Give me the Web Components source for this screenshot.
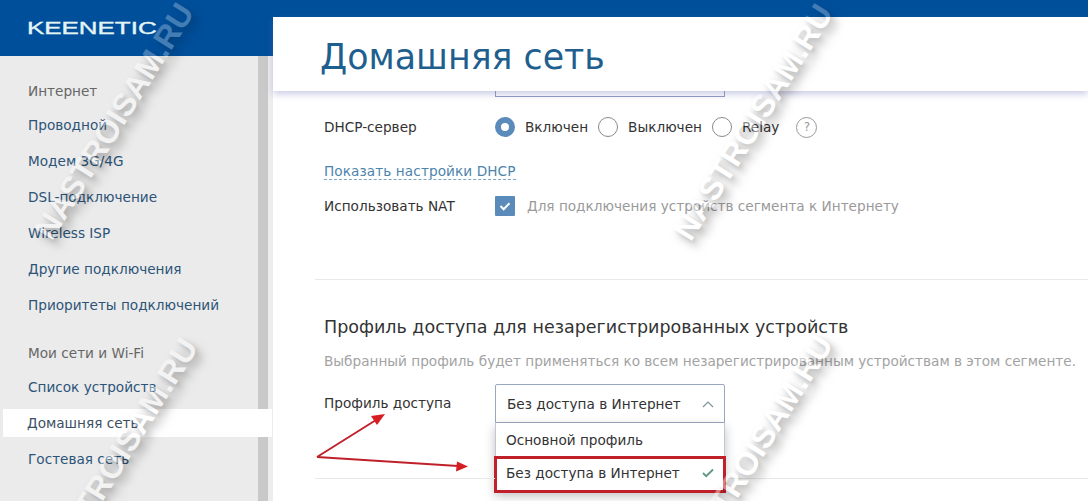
<!DOCTYPE html>
<html lang="ru">
<head>
<meta charset="utf-8">
<title>Домашняя сеть</title>
<style>
    html, body { margin: 0; height: 100%; overflow: hidden; background: #fff; }
    body { font-family: "DejaVu Sans", sans-serif; font-size: 13.63px; color: #333; }
</style>
</head>
<body>
<keenetic-app></keenetic-app>

<script>
class KeeneticApp extends HTMLElement {
    constructor() {
        super();
        this.attachShadow({ mode: "open" });
    }

    connectedCallback() {
        this.shadowRoot.innerHTML = `
            <style>
                :host { display: block; position: relative; width: 1088px; height: 501px; overflow: hidden; }
                .page { display: grid; grid-template-columns: 273px 1fr; height: 501px; }
                .right { display: flex; flex-direction: column; min-width: 0; }
                .topbar { height: 17px; background: #004f9b; }
                /* the blue header mutes the watermark that runs over it */
                .tint { position: absolute; z-index: 7; background: rgba(0, 79, 155, .38); }
                .tint.a { left: 0; top: 0; width: 1088px; height: 17px; }
                .tint.b { left: 0; top: 17px; width: 273px; height: 39px; }
            </style>
            <div class="page">
                <keenetic-sidebar></keenetic-sidebar>
                <div class="right">
                    <div class="topbar"></div>
                    <title-bar>Домашняя сеть</title-bar>
                    <segment-form></segment-form>
                </div>
            </div>
            <annotation-arrows></annotation-arrows>
            <water-mark style="left:114px;top:121px"></water-mark>
            <water-mark style="left:753px;top:122px"></water-mark>
            <water-mark style="left:118px;top:456px"></water-mark>
            <water-mark style="left:753px;top:453px"></water-mark>
            <div class="tint a"></div>
            <div class="tint b"></div>
        `;
    }
}

class KeeneticSidebar extends HTMLElement {
    constructor() {
        super();
        this.attachShadow({ mode: "open" });
    }

    connectedCallback() {
        const items = [
            ["head", "Интернет"],
            ["link", "Проводной"],
            ["link", "Модем 3G/4G"],
            ["link", "DSL-подключение"],
            ["link", "Wireless ISP"],
            ["link", "Другие подключения"],
            ["link", "Приоритеты подключений"],
            ["head second", "Мои сети и Wi-Fi"],
            ["link", "Список устройств"],
            ["link active", "Домашняя сеть"],
            ["link", "Гостевая сеть"],
        ];

        this.shadowRoot.innerHTML = `
            <style>
                :host { display: flex; flex-direction: column; width: 273px; height: 501px; }
                .logo { height: 56px; background: #004f9b; display: flex; align-items: center; padding-left: 27px; box-sizing: border-box; }
                .logo span { position: relative; z-index: 8; font: 16px/1 "Liberation Sans", sans-serif; -webkit-text-stroke: .35px #e4f5f5; color: #e4f5f5; transform: scale(1.62, 1); transform-origin: left center; margin-top: 2px; }
                .body { flex: 1; display: flex; }
                nav { width: 258px; background: #ebebeb; padding-top: 19px; box-sizing: border-box; display: flex; flex-direction: column; }
                .item { height: 36px; line-height: 36px; padding-left: 28px; color: #2b5478; white-space: nowrap; }
                .head { color: #666; height: 32px; line-height: 32px; }
                .second { margin-top: 14px; }
                .active { background: #fff; margin-left: 3px; padding-left: 24px; height: 28px; line-height: 28px; margin-top: 4px; margin-bottom: 4px; color: #3c5063; width: 269px; box-sizing: border-box; position: relative; }
                .track { width: 10px; background: #c9c9c9; }
                .edge { width: 5px; background: #ededed; }
            </style>
            <div class="logo"><span>KEENETIC</span></div>
            <div class="body">
                <nav>
                    ${items.map(([type, text]) => `<div class="item ${type}">${text}</div>`).join("")}
                </nav>
                <div class="track"></div>
                <div class="edge"></div>
            </div>
        `;
    }
}

class TitleBar extends HTMLElement {
    constructor() {
        super();
        this.attachShadow({ mode: "open" });
    }

    connectedCallback() {
        this.shadowRoot.innerHTML = `
            <style>
                :host { display: flex; align-items: center; height: 74px; box-sizing: border-box; padding: 6px 0 0 47px; background: #fff; position: relative; z-index: 2;
                    box-shadow: 0 3px 7px rgba(120, 125, 190, 0.4); color: #1f5f8f; font-size: 34.8px; white-space: nowrap; }
            </style>
            <slot></slot>
        `;
    }
}

class SegmentForm extends HTMLElement {
    constructor() {
        super();
        this.attachShadow({ mode: "open" });
    }

    connectedCallback() {
        this.shadowRoot.innerHTML = `
            <style>
                :host { display: block; flex: 1; position: relative; color: #333; }
                .stub { width: 230px; height: 6px; margin-left: 222px; box-sizing: border-box; border: 1px solid #8f9bbd; border-top: 0; }
                .row { display: grid; grid-template-columns: 171px 1fr; align-items: center; padding-left: 51px; }
                .dhcp { height: 30px; margin-top: 15px; }
                .opts { display: flex; align-items: center; }
                .link-row { padding-left: 51px; margin-top: 19px; height: 20px; line-height: 20px; }
                .link-row a { color: #4d84ac; border-bottom: 1px dashed #7fa5c2; letter-spacing: .09px; }
                .nat { height: 28px; margin-top: 11px; }
                hr { border: 0; height: 1px; background: #e8e8e8; margin: 59px 0 0 42px; }
                h2 { margin: 37px 0 0 51px; font-size: 17.5px; font-weight: normal; color: #333; line-height: 20px; white-space: nowrap; }
                .hint { margin: 15px 0 0 51px; color: #a3a3a3; height: 18px; line-height: 18px; white-space: nowrap; }
                .profile { margin-top: 14px; align-items: start; }
                .profile > span { line-height: 39px; }
                .rule { position: absolute; left: 42px; top: 387px; width: 180px; height: 1px; background: #e8e8e8; }
                .rule.far { left: 454px; width: 361px; }
            </style>
            <div class="stub"></div>
            <div class="row dhcp">
                <span>DHCP-сервер</span>
                <div class="opts">
                    <radio-option checked>Включен</radio-option>
                    <radio-option>Выключен</radio-option>
                    <radio-option>Relay</radio-option>
                    <help-mark></help-mark>
                </div>
            </div>
            <div class="link-row"><a>Показать настройки DHCP</a></div>
            <div class="row nat">
                <span>Использовать NAT</span>
                <check-option>Для подключения устройств сегмента к Интернету</check-option>
            </div>
            <hr>
            <h2>Профиль доступа для незарегистрированных устройств</h2>
            <div class="hint">Выбранный профиль будет применяться ко всем незарегистрированным устройствам в этом сегменте.</div>
            <div class="row profile">
                <span>Профиль доступа</span>
                <profile-select></profile-select>
            </div>
            <div class="rule"></div>
            <div class="rule far"></div>
        `;
    }
}

class RadioOption extends HTMLElement {
    constructor() {
        super();
        this.attachShadow({ mode: "open" });
    }

    connectedCallback() {
        const dot = this.hasAttribute("checked");
        this.shadowRoot.innerHTML = `
            <style>
                :host { display: inline-flex; align-items: center; gap: 10px; margin-right: 10px; white-space: nowrap; }
                i { width: 20px; height: 20px; border-radius: 50%; box-sizing: border-box; display: block;
                    border: ${dot ? "6px solid #5b8bbb" : "1px solid #8a8a8a"}; background: #fff; }
            </style>
            <i></i><slot></slot>
        `;
    }
}

class HelpMark extends HTMLElement {
    constructor() {
        super();
        this.attachShadow({ mode: "open" });
    }

    connectedCallback() {
        this.shadowRoot.innerHTML = `
            <style>
                :host { display: flex; align-items: center; justify-content: center; width: 19px; height: 19px; margin-left: 7px; border: 1px solid #999; border-radius: 50%; color: #999; font-size: 12px; }
            </style>
            ?
        `;
    }
}

class CheckOption extends HTMLElement {
    constructor() {
        super();
        this.attachShadow({ mode: "open" });
    }

    connectedCallback() {
        this.shadowRoot.innerHTML = `
            <style>
                :host { display: flex; align-items: center; gap: 12px; color: #9a9a9a; white-space: nowrap; }
                svg { width: 20px; height: 20px; flex: none; }
            </style>
            <svg viewBox="0 0 20 20"><rect width="20" height="20" rx="1" fill="#5b8bbb"/><path d="M5.5 10l3.2 3.2 5.8-6" fill="none" stroke="#fff" stroke-width="2"/></svg>
            <slot></slot>
        `;
    }
}

class ProfileSelect extends HTMLElement {
    constructor() {
        super();
        this.attachShadow({ mode: "open" });
    }

    connectedCallback() {
        this.shadowRoot.innerHTML = `
            <style>
                :host { display: block; width: 230px; position: relative; }
                .box { height: 39px; box-sizing: border-box; border: 1px solid #9aa7c0; border-radius: 2px 2px 0 0; display: flex; align-items: center; justify-content: space-between; padding: 0 9px 0 11px; white-space: nowrap; background: #fff; }
                .menu { border: 1px solid #c0c8d6; border-top: 0; background: #fff; box-shadow: 0 4px 10px rgba(0,0,0,.25); position: relative; }
                .opt { height: 34px; padding: 0 9px 0 10px; display: flex; justify-content: space-between; align-items: center; white-space: nowrap; box-sizing: border-box; }
                .picked { height: 33px; margin-top: 1px; padding-left: 10px; padding-bottom: 4px; outline: 3px solid #bf2029; outline-offset: -1px; }
                svg { width: 14px; height: 10px; flex: none; }
            </style>
            <div class="box">
                <span>Без доступа в Интернет</span>
                <svg viewBox="0 0 14 10"><path d="M2 8l5-5 5 5" fill="none" stroke="#7f9197" stroke-width="1.2"/></svg>
            </div>
            <div class="menu">
                <div class="opt">Основной профиль</div>
                <div class="opt picked">
                    <span>Без доступа в Интернет</span>
                    <svg viewBox="0 0 14 10"><path d="M2 5l3.2 3.2L12 1.5" fill="none" stroke="#5f9486" stroke-width="1.8"/></svg>
                </div>
            </div>
        `;
    }
}

class AnnotationArrows extends HTMLElement {
    constructor() {
        super();
        this.attachShadow({ mode: "open" });
    }

    connectedCallback() {
        this.shadowRoot.innerHTML = `
            <style>
                :host { position: absolute; inset: 0; z-index: 5; pointer-events: none; }
                svg { width: 1088px; height: 501px; display: block; }
            </style>
            <svg viewBox="0 0 1088 501">
                <path d="M317 457L376 420M317 457L458 466" fill="none" stroke="#bf2029" stroke-width="1.9"/>
                <path d="M385 414l-14 2 6 9z" fill="#d81c24"/>
                <path d="M468 466.500l-11-5 -1 10z" fill="#d81c24"/>
            </svg>
        `;
    }
}

class WaterMark extends HTMLElement {
    constructor() {
        super();
        this.attachShadow({ mode: "open" });
    }

    connectedCallback() {
        this.shadowRoot.innerHTML = `
            <style>
                :host { position: absolute; z-index: 6; pointer-events: none; opacity: .42; transform: translate(-50%, -50%) rotate(-58deg);
                    font: bold 32px/1 "Liberation Sans", sans-serif; color: #fff; white-space: nowrap;
                    text-shadow: -2px 8px 9px rgba(0,0,0,.7), -1px 3px 4px rgba(0,0,0,.25); }
            </style>
            NASTROISAM.RU
        `;
    }
}

customElements.define("keenetic-app", KeeneticApp);
customElements.define("keenetic-sidebar", KeeneticSidebar);
customElements.define("title-bar", TitleBar);
customElements.define("segment-form", SegmentForm);
customElements.define("radio-option", RadioOption);
customElements.define("help-mark", HelpMark);
customElements.define("check-option", CheckOption);
customElements.define("profile-select", ProfileSelect);
customElements.define("annotation-arrows", AnnotationArrows);
customElements.define("water-mark", WaterMark);
</script>
</body>
</html>
